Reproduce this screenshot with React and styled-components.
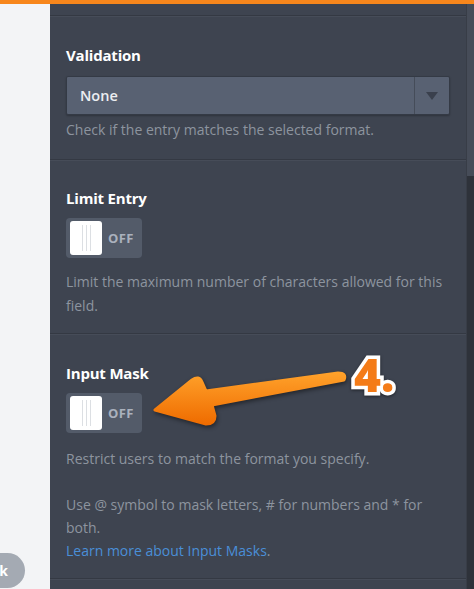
import React from 'react';
import styled, { createGlobalStyle } from 'styled-components';

const GlobalStyle = createGlobalStyle`
  html, body {
    margin: 0;
    padding: 0;
    background: #f3f4f6;
  }
  body {
    font-family: "Open Sans", "Noto Sans", sans-serif;
  }
`;

const Page = styled.div`
  position: relative;
  width: 474px;
  height: 589px;
  overflow: hidden;
  display: flex;
  flex-direction: column;
`;

const TopBar = styled.div`
  height: 4px;
  background: #f7861c;
  flex-shrink: 0;
`;

const Body = styled.div`
  flex: 1;
  display: flex;
  min-height: 0;
`;

const Gutter = styled.div`
  width: 50px;
  background: #f3f4f6;
  flex-shrink: 0;
`;

const Panel = styled.div`
  flex: 1;
  background: #3e4450;
  display: flex;
  flex-direction: column;
`;

const Scrollbar = styled.div`
  width: 7px;
  border-left: 1px solid #383d47;
  display: flex;
  flex-direction: column;
`;

const ScrollTrack = styled.div`
  height: ${p => p.h}px;
  background: ${p => p.color};
  flex: ${p => (p.grow ? 1 : 'none')};
`;

const Section = styled.section`
  padding: ${p => p.pad};
  border-bottom: 1px solid #343943;
  box-shadow: 0 1px 0 #464c58;
`;

const Label = styled.div`
  font-size: 15px;
  line-height: 20px;
  font-weight: 700;
  color: #ffffff;
  letter-spacing: -0.2px;
`;

const Select = styled.div`
  margin-top: 11px;
  height: 39px;
  display: flex;
  background: #586172;
  border: 1px solid #343a45;
  border-radius: 2px;
  box-sizing: border-box;
  box-shadow: 0 1px 2px rgba(0, 0, 0, 0.25);
`;

const SelectValue = styled.div`
  flex: 1;
  display: flex;
  align-items: center;
  padding-left: 13px;
  font-size: 14.5px;
  font-weight: 600;
  color: #eceef1;
`;

const SelectArrow = styled.div`
  width: 34px;
  border-left: 1px solid #454c59;
  display: flex;
  align-items: center;
  justify-content: center;

  &::after {
    content: '';
    border-left: 6px solid transparent;
    border-right: 6px solid transparent;
    border-top: 8px solid #3a404d;
  }
`;

const Hint = styled.p`
  margin: ${p => p.mt}px 0 0;
  font-size: 14px;
  line-height: ${p => p.lh || 24}px;
  color: #8d949f;
`;

const Link = styled.a`
  color: #4a8fd8;
  text-decoration: none;
`;

const Toggle = styled.div`
  margin-top: 10px;
  width: 76px;
  height: 40px;
  box-sizing: border-box;
  padding: 3px 4px;
  background: #535b69;
  border-radius: 4px;
  display: flex;
  align-items: center;
  gap: 6px;
`;

const Knob = styled.div`
  width: 32px;
  height: 34px;
  background: #ffffff;
  border-radius: 3px;
  display: flex;
  align-items: center;
  justify-content: center;
  gap: 3px;
`;

const Grip = styled.span`
  width: 1px;
  height: 26px;
  background: #dcdfe3;
`;

const ToggleText = styled.span`
  font-size: 13px;
  font-weight: 700;
  color: #aab1bd;
  letter-spacing: 0.4px;
`;

const Overlay = styled.svg`
  position: absolute;
  left: 0;
  top: 0;
  pointer-events: none;
  filter: drop-shadow(1px 2px 2px rgba(0, 0, 0, 0.45));
`;

const StepNumber = styled.div`
  position: absolute;
  left: 354px;
  top: 351px;
  font-size: 46px;
  line-height: 46px;
  font-weight: 800;
  color: #f47b17;
  -webkit-text-stroke: 7px #ffffff;
  paint-order: stroke fill;
  filter: drop-shadow(0 1px 1.5px rgba(0, 0, 0, 0.5));
`;

const Feedback = styled.div`
  position: absolute;
  left: -62px;
  bottom: 1px;
  width: 87px;
  height: 35px;
  border-radius: 18px;
  background: #a4aab3;
  display: flex;
  align-items: center;
  justify-content: flex-end;
  padding-right: 17px;
  box-sizing: border-box;
  font-size: 14px;
  font-weight: 700;
  color: #ffffff;
`;

function Switch() {
  return (
    <Toggle>
      <Knob>
        <Grip />
        <Grip />
        <Grip />
      </Knob>
      <ToggleText>OFF</ToggleText>
    </Toggle>
  );
}

export default function App() {
  return (
    <>
      <GlobalStyle />
      <Page>
        <TopBar />
        <Body>
          <Gutter />
          <Panel>
            <Section pad="0 0 11px" />
            <Section pad="29px 16px 17px">
              <Label>Validation</Label>
              <Select>
                <SelectValue>None</SelectValue>
                <SelectArrow />
              </Select>
              <Hint mt={3}>Check if the entry matches the selected format.</Hint>
            </Section>
            <Section pad="28px 16px 15px">
              <Label>Limit Entry</Label>
              <Switch />
              <Hint mt={12}>Limit the maximum number of characters allowed for this field.</Hint>
            </Section>
            <Section pad="29px 16px 16px">
              <Label>Input Mask</Label>
              <Switch />
              <Hint mt={14} lh={23}>
                Restrict users to match the format you specify.
                <br />
                <br />
                Use @ symbol to mask letters, # for numbers and * for both.
                <br />
                <Link href="#">Learn more about Input Masks</Link>.
              </Hint>
            </Section>
          </Panel>
          <Scrollbar>
            <ScrollTrack h={172} color="#464c58" />
            <ScrollTrack grow color="#2e323a" />
          </Scrollbar>
        </Body>

        <Overlay width="474" height="589" viewBox="0 0 474 589">
          <defs>
            <linearGradient id="arrowFill" x1="0" y1="0" x2="0" y2="1">
              <stop offset="0" stopColor="#ffa12a" />
              <stop offset="1" stopColor="#ef6c00" />
            </linearGradient>
          </defs>
          <path
            d="M155,410 L192,380 Q199,375 202,382 L206,391 L338,373 Q347,373 344,380 L212,405 L215,416 Q215,424 206,424 Z"
            fill="url(#arrowFill)"
            stroke="url(#arrowFill)"
            strokeWidth="3"
            strokeLinejoin="round"
          />
        </Overlay>
        <StepNumber>4.</StepNumber>
        <Feedback>Feedback</Feedback>
      </Page>
    </>
  );
}
